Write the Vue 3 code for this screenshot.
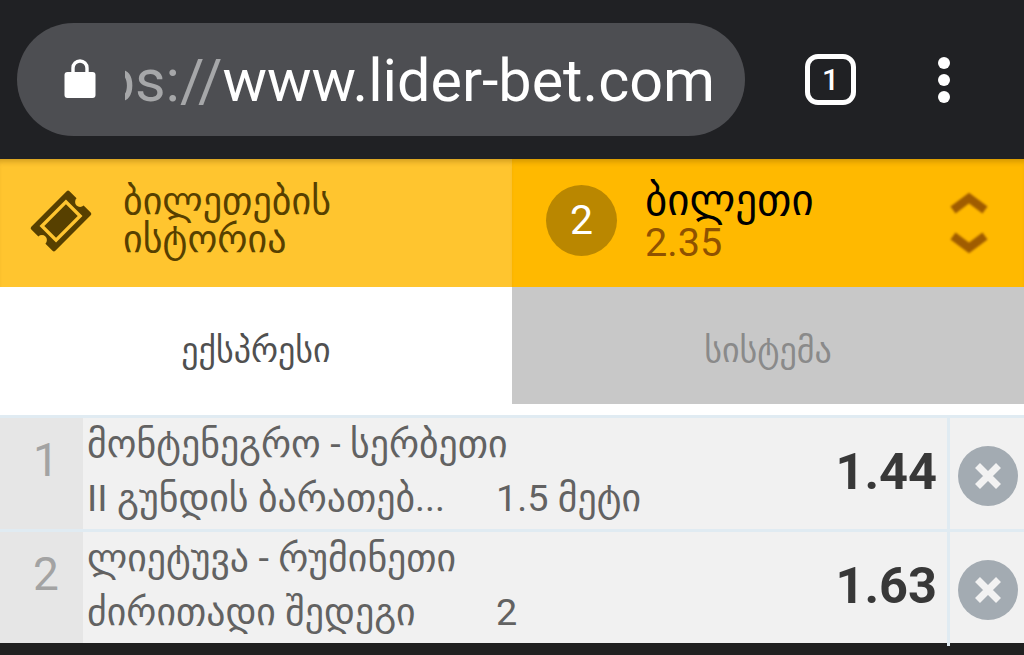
<script setup>
const bets = [
  { id: 1, match: 'მონტენეგრო - სერბეთი', market: 'II გუნდის ბარათებ...', pick: '1.5 მეტი', odds: '1.44' },
  { id: 2, match: 'ლიეტუვა - რუმინეთი', market: 'ძირითადი შედეგი', pick: '2', odds: '1.63' }
]
</script>

<template>
  <div class="screen">
    <header class="chrome">
      <div class="pill">
        <svg class="lock" width="32" height="42" viewBox="0 0 32 42">
          <path d="M9 17v-6a7 7 0 0 1 14 0v6" fill="none" stroke="#fff" stroke-width="3.4" />
          <rect x="0.5" y="15" width="31" height="26" rx="3" fill="#fff" />
        </svg>
        <div class="url"><span class="scheme">https://</span>www.lider-bet.com</div>
      </div>
      <div class="tabs-count">1</div>
      <div class="dots"><i></i><i></i><i></i></div>
    </header>

    <section class="top">
      <div class="history">
        <svg class="ticket" width="64" height="64" viewBox="-32 -32 64 64">
          <g transform="rotate(-45)">
            <path d="M-25 -17H25Q27 -17 27 -15V-5A5 5 0 0 0 27 5V15Q27 17 25 17H-25Q-27 17 -27 15V5A5 5 0 0 0 -27 -5V-15Q-27 -17 -25 -17Z" fill="#574000" />
            <rect x="-17" y="-10" width="34" height="20" fill="none" stroke="#ffc52f" stroke-width="3.4" />
          </g>
        </svg>
        <div class="history-text">ბილეთების<br />ისტორია</div>
      </div>
      <div class="slip">
        <div class="count">2</div>
        <div class="slip-text">
          <div class="slip-title">ბილეთი</div>
          <div class="slip-total">2.35</div>
        </div>
        <svg class="arrows" width="38" height="64" viewBox="0 0 38 64">
          <path d="M3 19L19 7L35 19" />
          <path d="M3 45L19 57L35 45" />
        </svg>
      </div>
    </section>

    <nav class="modes">
      <div class="mode active">ექსპრესი</div>
      <div class="mode">სისტემა</div>
    </nav>

    <ul class="bets">
      <li v-for="bet in bets" :key="bet.id" class="bet">
        <div class="num">{{ bet.id }}</div>
        <div class="info">
          <div class="match">{{ bet.match }}</div>
          <div class="detail">
            <span class="market">{{ bet.market }}</span>
            <span>{{ bet.pick }}</span>
          </div>
        </div>
        <div class="odds">{{ bet.odds }}</div>
        <div class="remove">
          <div class="circle">
            <svg width="30" height="30" viewBox="0 0 30 30">
              <path d="M4.5 4.5L25.5 25.5M25.5 4.5L4.5 25.5" stroke="#f2f2f2" stroke-width="7" />
            </svg>
          </div>
        </div>
      </li>
    </ul>
  </div>
</template>

<style>
html,
body {
  background: #202020;
  overflow: hidden;
}
</style>

<style scoped>
.screen {
  width: 1024px;
  height: 655px;
  overflow: hidden;
  font-family: Roboto, "DejaVu Sans", sans-serif;
  background: #202020;
}

.chrome {
  height: 159px;
  background: #202124;
  display: flex;
  align-items: flex-start;
  padding: 23px 0 0 17px;
  box-sizing: border-box;
}

.pill {
  width: 728px;
  height: 113px;
  border-radius: 57px;
  background: #4d4e52;
  display: flex;
  align-items: center;
  box-sizing: border-box;
  padding: 0 30px 0 47px;
}

.lock {
  flex: none;
  margin-top: -3px;
}

.url {
  flex: 1;
  min-width: 0;
  margin-left: 29px;
  display: flex;
  justify-content: flex-end;
  overflow: hidden;
  white-space: nowrap;
  color: #fff;
  font-size: 59.3px;
  line-height: 70px;
  margin-top: 2px;
}

.scheme {
  color: #a6a7a9;
}

.tabs-count {
  width: 51px;
  height: 51px;
  margin: 31px 0 0 60px;
  border: 5px solid #fff;
  border-radius: 13px;
  box-sizing: border-box;
  color: #fff;
  font-size: 30px;
  font-weight: 500;
  display: flex;
  align-items: center;
  justify-content: center;
}

.dots {
  margin: 34px 0 0 82px;
  display: flex;
  flex-direction: column;
  gap: 5px;
}

.dots i {
  width: 12px;
  height: 12px;
  border-radius: 50%;
  background: #fff;
}

.top {
  height: 128px;
  display: flex;
}

.history,
.slip {
  width: 512px;
  display: flex;
  align-items: center;
  box-sizing: border-box;
  box-shadow: inset 0 6px 5px -3px rgba(120, 80, 0, 0.3);
}

.history {
  background: #ffc52f;
  padding-left: 29px;
}

.ticket {
  flex: none;
  margin-top: -4px;
}

.history-text {
  margin-left: 30px;
  color: #574000;
  font-size: 38px;
  line-height: 38px;
  margin-top: -6px;
}

.slip {
  background: #ffb900;
  padding-left: 34px;
}

.count {
  flex: none;
  width: 71px;
  height: 71px;
  border-radius: 50%;
  background: #ba8700;
  color: #fff;
  font-size: 41px;
  margin-top: -6px;
  display: flex;
  align-items: center;
  justify-content: center;
}

.slip-text {
  flex: 1;
  margin-left: 28px;
  margin-top: -4px;
}

.slip-title {
  color: #000;
  font-size: 43px;
  line-height: 44px;
}

.slip-total {
  color: #8f5200;
  font-size: 39.6px;
  line-height: 42px;
}

.arrows {
  flex: none;
  margin-right: 36px;
  margin-top: -1px;
  filter: blur(0.8px);
}

.arrows path {
  fill: none;
  stroke: #a05c00;
  stroke-width: 8.5;
}

.modes {
  height: 117px;
  display: flex;
}

.mode {
  width: 512px;
  background: #c8c8c8;
  color: #8a8a8a;
  font-size: 34px;
  display: flex;
  align-items: center;
  justify-content: center;
  padding-top: 8px;
  box-sizing: border-box;
}

.mode.active {
  background: #fff;
  color: #505050;
}

.bets {
  list-style: none;
  margin: 0;
  padding: 11px 0 0;
  background: #fff;
  height: 239px;
  box-sizing: border-box;
}

.bet {
  height: 114px;
  border-top: 3px solid #e0ebf2;
  display: flex;
  background: #f1f1f1;
  box-sizing: border-box;
}

.num {
  flex: none;
  width: 83px;
  background: #e6e6e6;
  color: #a3a3a3;
  font-size: 46px;
  display: flex;
  align-items: center;
  justify-content: center;
  padding: 0 0 27px 9px;
  box-sizing: border-box;
}

.info {
  flex: 1;
  min-width: 0;
  padding-left: 4px;
  color: #626262;
  font-size: 37.8px;
}

.match {
  line-height: 52px;
}

.detail {
  display: flex;
  line-height: 56px;
}

.market {
  width: 409px;
  flex: none;
}

.odds {
  flex: none;
  align-self: center;
  margin: 0 10px 4px 0;
  color: #383838;
  font-size: 50.5px;
  font-weight: 700;
}

.remove {
  flex: none;
  position: relative;
  width: 77px;
  border-left: 3px solid #e0ebf2;
  display: flex;
  align-items: center;
  padding: 4px 0 0 8px;
  box-sizing: border-box;
}

/* the divider pokes out a little under the last row */
.bet:last-child .remove::after {
  content: '';
  position: absolute;
  left: -3px;
  bottom: -3px;
  width: 3px;
  height: 3px;
  background: #e0ebf2;
}

.circle {
  width: 60px;
  height: 60px;
  border-radius: 50%;
  background: #a3abb2;
  display: flex;
  align-items: center;
  justify-content: center;
}
</style>
